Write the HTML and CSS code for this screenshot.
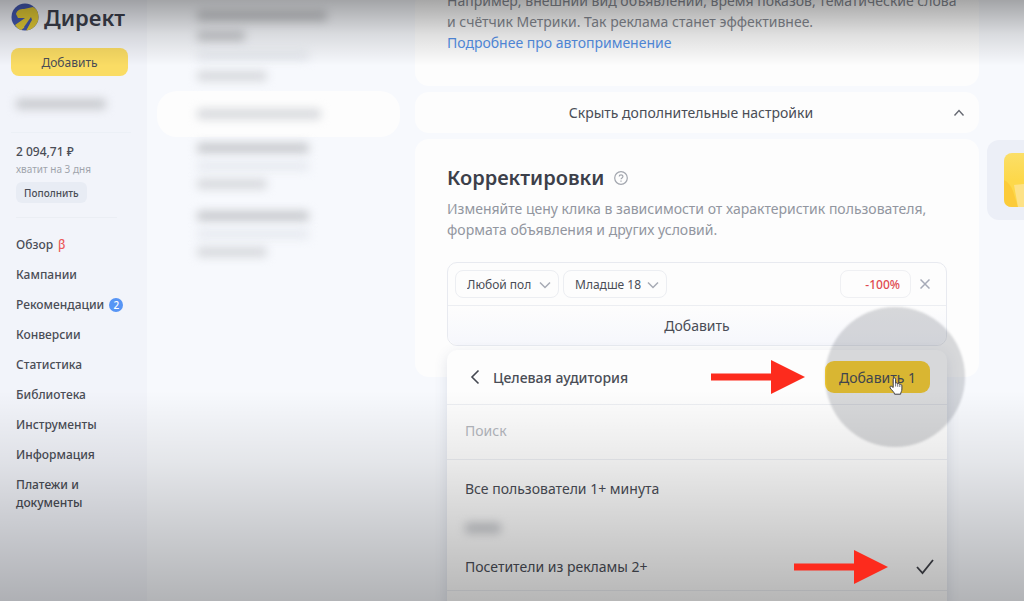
FILE: index.html
```
<!DOCTYPE html>
<html lang="ru">

<head>
    <meta charset="UTF-8">
    <meta name="viewport" content="width=device-width, initial-scale=1.0">
    <title>Директ</title>
    <link rel="stylesheet" href="styles.css">
</head>

<body>

    <div class="layout">
        <aside class="sidebar">
            <a href="#" class="logo">
                <svg width="28" height="28" viewBox="0 0 28 28" aria-hidden="true">
                    <defs>
                        <clipPath id="logoClip"><circle cx="14" cy="14" r="13.5" /></clipPath>
                    </defs>
                    <g clip-path="url(#logoClip)">
                        <rect width="28" height="28" fill="#4358b0" />
                        <path d="M5 11 C6 7 9 6 13 6 L22 4 L28 8 V28 H15 L19 20 L9 28 L4 22 L14 15 L7 15 Z" fill="#e3cb35" />
                        <path d="M20 14 L13 24 L15 27 L21 17 Z" fill="#4358b0" />
                    </g>
                </svg>
                <span>Директ</span>
            </a>
            <button type="button" class="btn-add">Добавить</button>
            <div class="account"><span class="blurred w90 strong"></span></div>
            <div class="balance">
                <div class="balance-sum">2 094,71 ₽</div>
                <div class="balance-note">хватит на 3 дня</div>
                <button type="button" class="btn-refill">Пополнить</button>
            </div>
            <nav class="menu">
                <a href="#">Обзор <span class="beta">β</span></a>
                <a href="#">Кампании</a>
                <a href="#">Рекомендации <span class="badge">2</span></a>
                <a href="#">Конверсии</a>
                <a href="#">Статистика</a>
                <a href="#">Библиотека</a>
                <a href="#">Инструменты</a>
                <a href="#">Информация</a>
                <a href="#">Платежи и документы</a>
            </nav>
        </aside>

        <div class="campaigns">
            <div class="campaign campaign-first">
                <span class="blurred w130 strong"></span>
                <span class="blurred w50 strong"></span>
                <span class="blurred w110 light"></span>
                <span class="blurred w70"></span>
            </div>
            <div class="campaign active">
                <span class="blurred w120"></span>
            </div>
            <div class="campaign">
                <span class="blurred w110 strong"></span>
                <span class="blurred w110 light"></span>
                <span class="blurred w70"></span>
            </div>
            <div class="campaign">
                <span class="blurred w110 strong"></span>
                <span class="blurred w110 light"></span>
                <span class="blurred w70"></span>
            </div>
        </div>

        <main class="content">
            <section class="card card-auto">
                <p>Например, внешний вид объявлений, время показов, тематические слова и счётчик Метрики. Так реклама станет эффективнее.</p>
                <a href="#">Подробнее про автоприменение</a>
            </section>

            <button type="button" class="card toggle">
                <span>Скрыть дополнительные настройки</span>
                <svg width="12" height="8" viewBox="0 0 12 8" fill="none" stroke="#666972" stroke-width="1.4" aria-hidden="true">
                    <path d="M1.5 6.5 L6 1.5 L10.5 6.5" />
                </svg>
            </button>

            <section class="card corrections">
                <h2>Корректировки
                    <svg width="14" height="14" viewBox="0 0 14 14" fill="none" stroke="#a2a6ae" stroke-width="1.2" aria-hidden="true">
                        <circle cx="7" cy="7" r="6.3" />
                        <path d="M5.2 5.6 C5.2 3.2 8.9 3.2 8.9 5.5 C8.9 7 7 6.8 7 8.3 M7 9.6 V10.8" />
                    </svg>
                </h2>
                <p>Изменяйте цену клика в зависимости от характеристик пользователя, формата объявления и других условий.</p>

                <div class="rules">
                    <div class="rule">
                        <div class="select">
                            <select aria-label="Пол">
                                <option>Любой пол</option>
                            </select>
                            <svg width="12" height="8" viewBox="0 0 12 8" fill="none" stroke="#a7abb5" stroke-width="1.5" aria-hidden="true">
                                <path d="M1 1.5 L6 6.5 L11 1.5" />
                            </svg>
                        </div>
                        <div class="select">
                            <select aria-label="Возраст">
                                <option>Младше 18</option>
                            </select>
                            <svg width="12" height="8" viewBox="0 0 12 8" fill="none" stroke="#a7abb5" stroke-width="1.5" aria-hidden="true">
                                <path d="M1 1.5 L6 6.5 L11 1.5" />
                            </svg>
                        </div>
                        <input type="text" class="percent" value="-100%" aria-label="Корректировка">
                        <button type="button" class="remove" aria-label="Удалить">
                            <svg width="10" height="10" viewBox="0 0 10 10" stroke="#a7abb8" stroke-width="1.5" aria-hidden="true">
                                <path d="M0.5 0.5 L9.5 9.5 M9.5 0.5 L0.5 9.5" />
                            </svg>
                        </button>
                    </div>
                    <button type="button" class="rule-add">Добавить</button>

                    <div class="popup">
                        <div class="popup-head">
                            <button type="button" class="back" aria-label="Назад">
                                <svg width="10" height="16" viewBox="0 0 10 16" fill="none" stroke="#454851" stroke-width="1.6" aria-hidden="true">
                                    <path d="M8.5 1.5 L2 8 L8.5 14.5" />
                                </svg>
                            </button>
                            <h3>Целевая аудитория</h3>
                            <svg class="arrow" width="94" height="34" viewBox="0 0 94 34" fill="#fd2b1d" aria-hidden="true">
                                <path d="M0 13.5 H60 V0 L94 17 L60 34 V20.5 H0 Z" />
                            </svg>
                            <div class="confirm">
                                <button type="button" class="btn-confirm">Добавить 1</button>
                                <div class="spot"></div>
                                <svg class="cursor" width="14" height="18" viewBox="0 0 14 18" aria-hidden="true">
                                    <path d="M4.2 10.5 V2.2 C4.2 0.4 6.6 0.4 6.6 2.2 V6.2 C7.2 5.6 8.5 5.8 8.7 6.8 C9.4 6.2 10.6 6.5 10.8 7.5 C11.6 7 12.9 7.4 12.9 8.8 V12 C12.9 14.3 11.8 15 11.6 17.2 H5.6 C5.2 15 2.8 13.4 1.2 11 C0.3 9.4 1.8 8.6 2.8 9.4 Z" fill="#fff" stroke="#3d3d45" stroke-width="1" />
                                    <path d="M6.6 6.2 V9.5 M8.7 6.8 V9.8 M10.8 7.5 V10" stroke="#3d3d45" stroke-width="0.7" />
                                </svg>
                            </div>
                        </div>
                        <input type="text" class="search" placeholder="Поиск" aria-label="Поиск">
                        <ul class="audiences">
                            <li>Все пользователи 1+ минута</li>
                            <li><span class="blurred w40 strong"></span></li>
                            <li>
                                <span>Посетители из рекламы 2+</span>
                                <svg class="arrow" width="94" height="34" viewBox="0 0 94 34" fill="#fd2b1d" aria-hidden="true">
                                    <path d="M0 13.5 H60 V0 L94 17 L60 34 V20.5 H0 Z" />
                                </svg>
                                <svg class="check" width="18" height="16" viewBox="0 0 18 16" fill="none" stroke="#41434a" stroke-width="1.8" aria-hidden="true">
                                    <path d="M1 8 L6.5 14 L17 1" />
                                </svg>
                            </li>
                        </ul>
                    </div>
                </div>
            </section>
        </main>

        <aside class="promo">
            <div class="promo-card">
                <svg width="54" height="54" viewBox="0 0 54 54" aria-hidden="true">
                    <defs>
                        <linearGradient id="promoFill" x1="0" y1="0" x2="0" y2="1">
                            <stop offset="0" stop-color="#fbdf68" />
                            <stop offset="0.5" stop-color="#fdd84a" />
                        </linearGradient>
                    </defs>
                    <rect width="54" height="54" rx="8" fill="url(#promoFill)" />
                    <path d="M0 27 Q6 30 9 38 L14 54 H8 Q0 54 0 46 Z" fill="#fccb39" />
                    <path d="M10 32 L30 30 V54 H14 Z" fill="#fde287" />
                </svg>
            </div>
        </aside>
    </div>

    <div class="shade"></div>

</body>

</html>
```

FILE: styles.css
```
/* Basic Reset */
* {
    margin: 0;
    padding: 0;
    box-sizing: border-box;
}

body {
    font-family: "Noto Sans", sans-serif;
    font-size: 12px;
    color: #4a4d56;
    background-color: #f7f9fd;
    height: 100vh;
    overflow: hidden;
}

button,
input,
select {
    font: inherit;
    color: inherit;
    border: none;
    background: none;
    outline: none;
}

button {
    cursor: pointer;
}

a {
    color: inherit;
    text-decoration: none;
}

.layout {
    display: grid;
    grid-template-columns: 147px 268px minmax(0, 1fr) 45px;
    height: 100%;
}

/* Sidebar */
.sidebar {
    background-color: #f2f4fa;
    padding: 3px 16px 0 11px;
}

.logo {
    display: flex;
    align-items: center;
    gap: 5px;
    height: 28px;
    font-size: 22px;
    font-weight: 600;
    color: #3c3f4c;
}

.logo svg {
    flex-shrink: 0;
}

.btn-add {
    width: 117px;
    height: 28px;
    margin-top: 17px;
    border-radius: 8px;
    background-color: #fadc64;
}

.account {
    padding: 23px 5px;
    border-bottom: 1px solid #ecf0f6;
}

.balance {
    margin: 0 14px 16px 5px;
    padding: 10px 0 14px;
    border-bottom: 1px solid #ebeef4;
}

.balance-sum {
    line-height: 18px;
    font-weight: 500;
}

.balance-note {
    font-size: 10px;
    line-height: 16px;
    color: #a0a4ac;
}

.btn-refill {
    height: 21px;
    margin-top: 5px;
    padding: 0 8px;
    border-radius: 6px;
    font-size: 10px;
    font-weight: 500;
    background-color: #e8ecf4;
}

.menu {
    display: flex;
    flex-direction: column;
    gap: 12px;
    padding: 2px 0 0 5px;
}

.menu a {
    display: flex;
    align-items: center;
    gap: 5px;
    line-height: 18px;
    font-weight: 500;
}

.beta {
    color: #ec5a5a;
}

.badge {
    width: 14px;
    height: 14px;
    border-radius: 50%;
    font-size: 10px;
    line-height: 14px;
    text-align: center;
    color: #fff;
    background-color: #5795f5;
}

/* Hidden names */
.blurred {
    display: block;
    height: 10px;
    border-radius: 4px;
    background-color: #d6d8dc;
    filter: blur(5px);
}

.strong {
    background-color: #c6c8cc;
}

.light {
    background-color: #e7eaf0;
}

.w40 { width: 36px; }
.w50 { width: 48px; }
.w70 { width: 70px; }
.w90 { width: 90px; }
.w110 { width: 112px; }
.w120 { width: 124px; }
.w130 { width: 130px; }

/* Campaign list */
.campaigns {
    padding: 0 15px 0 10px;
}

.campaign {
    display: flex;
    flex-direction: column;
    gap: 8px;
    padding: 6px 40px 16px;
}

.campaign-first {
    padding-top: 11px;
    gap: 10px;
    padding-bottom: 10px;
}

.campaign.active {
    padding: 18px 40px;
    border-radius: 20px;
    background-color: #fdfdfd;
}

/* Main column, scrolled so the first card runs off the top */
.content {
    display: flex;
    flex-direction: column;
    gap: 6px;
    margin-top: -10px;
}

.card {
    border-radius: 14px;
    background-color: #fdfdfd;
}

.card p {
    font-size: 14px;
    line-height: 21px;
    color: #9296a0;
}

.card-auto {
    padding: 0 12px 33px 32px;
}

.card-auto p {
    color: #868a92;
}

.card-auto a {
    display: block;
    font-size: 14px;
    line-height: 21px;
    color: #5591e8;
}

.toggle {
    display: flex;
    align-items: center;
    padding: 0 14px;
    height: 41px;
    font-size: 14px;
}

.toggle span {
    flex: 1;
}

.corrections {
    padding: 24px 32px 31px;
}

h2 {
    display: flex;
    align-items: center;
    gap: 10px;
    font-size: 20px;
    line-height: 30px;
    font-weight: 600;
    color: #3c404a;
    margin-bottom: 5px;
}

/* Rules */
.rules {
    position: relative;
    margin-top: 22px;
    border: 1px solid #e8eaf0;
    border-radius: 10px;
}

.rule {
    display: flex;
    align-items: center;
    gap: 4px;
    padding: 7px;
    border-bottom: 1px solid #eceef2;
}

.select {
    position: relative;
}

.select select {
    width: 104px;
    height: 28px;
    padding-left: 11px;
    border: 1px solid #eceef2;
    border-radius: 8px;
    appearance: none;
}

.select svg {
    position: absolute;
    right: 8px;
    top: 11px;
    pointer-events: none;
}

.percent {
    width: 71px;
    height: 28px;
    margin-left: auto;
    padding-right: 10px;
    border: 1px solid #eff0f3;
    border-radius: 8px;
    text-align: right;
    font-weight: 500;
    color: #e04a50;
}

.remove {
    display: flex;
    align-items: center;
    justify-content: center;
    width: 20px;
    height: 20px;
    margin-right: 4px;
}

.rule-add {
    display: block;
    width: 100%;
    height: 39px;
    font-size: 14px;
    border-radius: 0 0 10px 10px;
    background: linear-gradient(#fdfdfd, #f6f7fc);
}

/* Audience popup */
.popup {
    position: absolute;
    top: 100%;
    left: -1px;
    right: -1px;
    margin-top: 5px;
    padding-bottom: 20px;
    border-radius: 10px;
    background-color: #fdfdfd;
    box-shadow: 0 4px 14px rgba(60, 70, 110, 0.14);
}

.popup-head {
    display: flex;
    align-items: center;
    height: 55px;
    padding: 0 17px 0 23px;
    border-bottom: 1px solid #eceef2;
}

.back {
    display: flex;
    margin-right: 13px;
}

h3 {
    flex: 1;
    font-size: 14px;
    font-weight: 500;
}

/* Arrows stay bright over the dark fade */
.arrow {
    position: relative;
    z-index: 1;
    flex-shrink: 0;
}

.popup-head .arrow {
    margin-right: 20px;
}

.confirm {
    position: relative;
}

.btn-confirm {
    display: block;
    width: 105px;
    height: 32px;
    border-radius: 9px;
    font-size: 14px;
    background-color: #ffd535;
}

/* Click highlight around the cursor */
.spot {
    position: absolute;
    top: -54px;
    left: 0;
    width: 140px;
    height: 140px;
    border-radius: 50%;
    background-color: rgba(20, 22, 40, 0.16);
    filter: blur(1px);
    pointer-events: none;
}

.cursor {
    position: absolute;
    top: 16px;
    left: 64px;
    pointer-events: none;
}

.search {
    display: block;
    width: 100%;
    height: 55px;
    padding: 0 18px 4px;
    font-size: 14px;
    border-bottom: 1px solid #eceef2;
}

.search::placeholder {
    color: #b4b7bd;
}

.audiences {
    list-style: none;
    padding-top: 9px;
    padding-bottom: 4px;
    border-bottom: 1px solid #eceef2;
}

.audiences li {
    display: flex;
    align-items: center;
    height: 39px;
    padding: 0 13px 0 18px;
    font-size: 14px;
}

.audiences .arrow {
    margin-left: auto;
    margin-right: 28px;
}

/* Promo */
.promo {
    padding: 140px 0 0 8px;
    overflow: hidden;
}

.promo-card {
    width: 88px;
    padding: 13px 17px;
    border-radius: 12px;
    background-color: #eceff7;
}

.promo-card svg {
    display: block;
}

/* Dark fade at the top and bottom of the screen */
.shade {
    position: absolute;
    inset: 0;
    pointer-events: none;
    background:
        linear-gradient(rgba(0, 0, 0, 0.34), rgba(0, 0, 0, 0.12) 34px, transparent 66px),
        linear-gradient(transparent 65%, rgba(0, 0, 0, 0.08) 77%, rgba(0, 0, 0, 0.28));
}
```
